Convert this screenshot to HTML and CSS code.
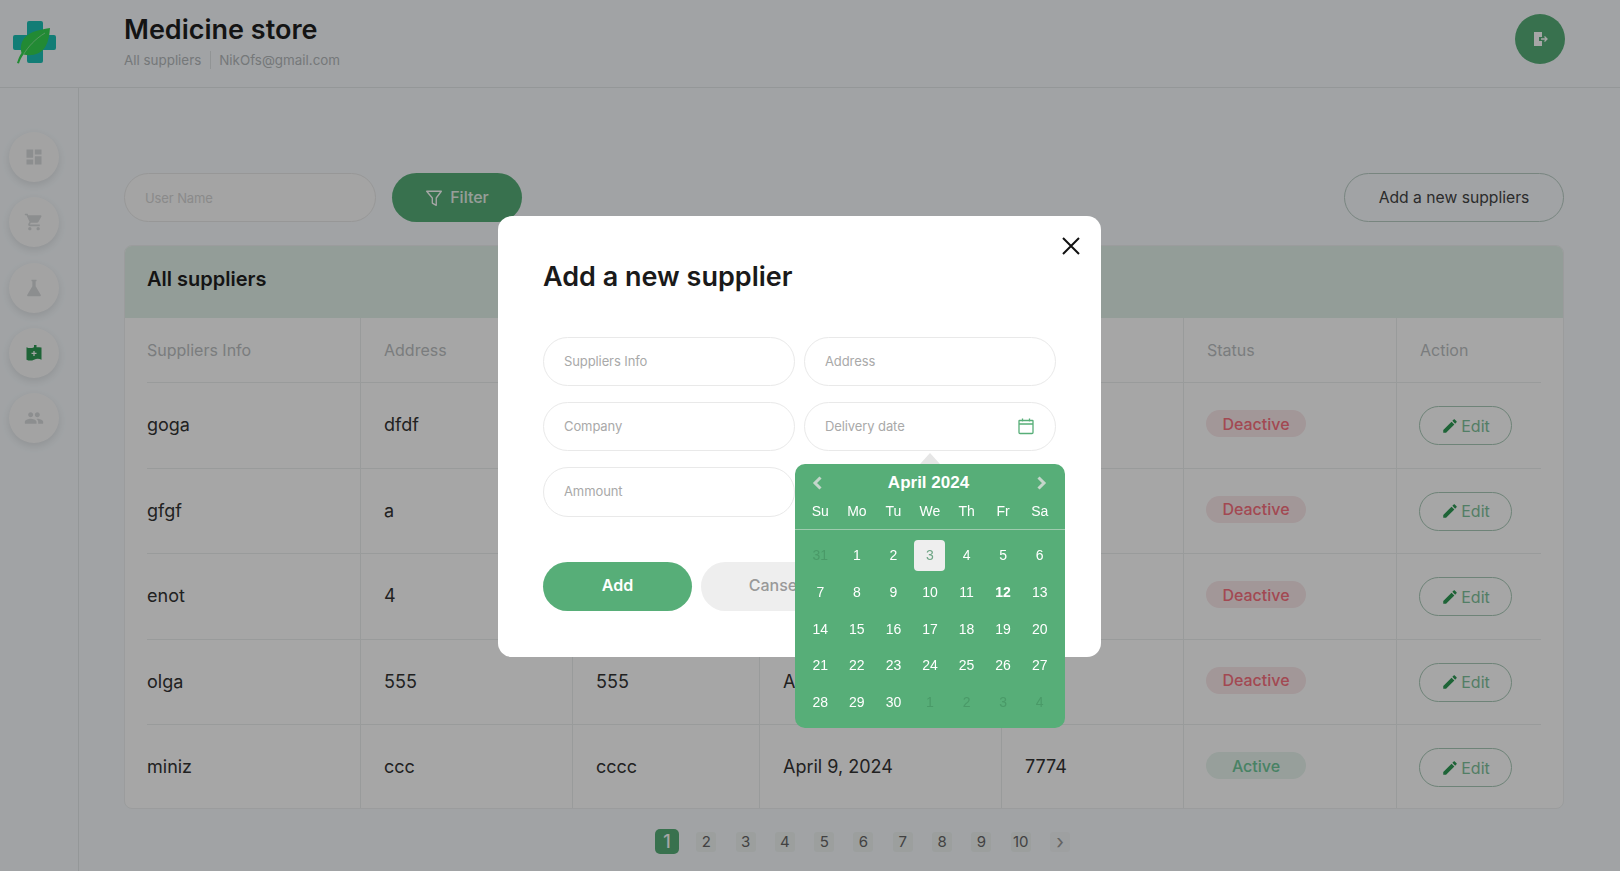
FILE: index.html
```html
<!DOCTYPE html>
<html lang="en">
<head>
    <meta charset="UTF-8">
    <meta name="viewport" content="width=device-width, initial-scale=1.0">
    <title>Medicine store</title>
    <link rel="stylesheet" href="styles.css">
</head>
<body>
    <header class="header">
        <div class="logo">
            <svg width="44" height="44" viewBox="0 0 44 44">
                <path d="M17 1h12a2 2 0 0 1 2 2v12h11a2 2 0 0 1 2 2v11a2 2 0 0 1-2 2H31v11a2 2 0 0 1-2 2H17a2 2 0 0 1-2-2V30H3a2 2 0 0 1-2-2V17a2 2 0 0 1 2-2h12V3a2 2 0 0 1 2-2z" fill="#1dc0b6"/>
                <path d="M38 8C26 10 14 12 10 22c-1.500 4-1.500 8-.5 11C7.500 36 6 39.500 5 43l2 .5c1-3.500 2.500-6.500 4.500-9 8 2 17 0 22-8 3-5 4-12 4.500-18.500z" fill="#35d450"/>
                <path d="M11.500 34.500C16 27 23 19 33 13" fill="none" stroke="#a5eeb0" stroke-width=".7"/>
            </svg>
        </div>
        <div class="header-text">
            <h1>Medicine store</h1>
            <p class="breadcrumbs"><span>All suppliers</span><span>NikOfs@gmail.com</span></p>
        </div>
        <button class="logout">
            <svg width="20" height="20" viewBox="0 0 20 20">
                <path d="M4 3h8v5H9v4h3v5H4z" fill="#fff"/>
                <path d="M11 10h6M14.500 7.500L17 10l-2.500 2.500" fill="none" stroke="#fff" stroke-width="1.300"/>
            </svg>
        </button>
    </header>

    <div class="layout">
        <nav class="sidebar">
            <a class="nav-item"><svg width="20" height="20" viewBox="0 0 24 24"><path d="M3 13h8V3H3v10zm0 8h8v-6H3v6zm10 0h8V11h-8v10zm0-18v6h8V3h-8z"/></svg></a>
            <a class="nav-item"><svg width="20" height="20" viewBox="0 0 24 24"><path d="M7 18c-1.100 0-1.990.9-1.990 2S5.900 22 7 22s2-.9 2-2-.9-2-2-2zM1 2v2h2l3.600 7.590-1.350 2.450c-.16.28-.25.61-.25.96 0 1.100.9 2 2 2h12v-2H7.420c-.14 0-.25-.11-.25-.25l.03-.12.9-1.630h7.450c.75 0 1.410-.41 1.750-1.030l3.580-6.490c.08-.14.12-.31.12-.48 0-.55-.45-1-1-1H5.210l-.94-2H1zm16 16c-1.100 0-1.990.9-1.990 2s.89 2 1.990 2 2-.9 2-2-.9-2-2-2z"/></svg></a>
            <a class="nav-item"><svg width="20" height="20" viewBox="0 0 24 24"><path d="M9 2h6v2h-1v6l6 10c.6 1.100-.1 2-1.200 2H5.200C4.100 22 3.400 21.100 4 20l6-10V4H9z"/></svg></a>
            <a class="nav-item current"><svg width="20" height="20" viewBox="0 0 24 24"><path d="M3 5c3 1.500 6 1.500 9 0V2.500h3V5c2 0 4 0 6 .5V20c-3-1.500-6-1.500-9 0s-6 1.500-9 0z"/><path d="M12 9.500v6M9 12.500h6" stroke="#fff" stroke-width="1.500" fill="none"/></svg></a>
            <a class="nav-item"><svg width="20" height="20" viewBox="0 0 24 24"><path d="M16 11c1.660 0 2.990-1.340 2.990-3S17.660 5 16 5c-1.660 0-3 1.340-3 3s1.340 3 3 3zm-8 0c1.660 0 2.990-1.340 2.990-3S9.660 5 8 5C6.340 5 5 6.340 5 8s1.340 3 3 3zm0 2c-2.330 0-7 1.170-7 3.500V19h14v-2.500c0-2.330-4.670-3.500-7-3.500zm8 0c-.29 0-.62.02-.97.05 1.160.84 1.970 1.970 1.970 3.450V19h6v-2.500c0-2.330-4.670-3.500-7-3.500z"/></svg></a>
        </nav>

        <main class="content">
            <div class="toolbar">
                <input class="pill-input filter-input" type="text" placeholder="User Name">
                <button class="btn-filter">
                    <svg width="18" height="18" viewBox="0 0 16 16"><path d="M1.500 2h13L10 8v6.500L6.500 12.500V8z" fill="none" stroke="#fff" stroke-width="1.200" stroke-linejoin="round"/></svg>
                    Filter
                </button>
                <button class="btn-add-new">Add a new suppliers</button>
            </div>

            <section class="card">
                <h2 class="card-title">All suppliers</h2>
                <table class="suppliers">
                    <colgroup>
                        <col class="col-info"><col class="col-address"><col class="col-company">
                        <col class="col-date"><col class="col-amount"><col class="col-status"><col class="col-action">
                    </colgroup>
                    <thead>
                        <tr>
                            <th>Suppliers Info</th><th>Address</th><th></th><th></th><th></th><th>Status</th><th>Action</th>
                        </tr>
                    </thead>
                    <tbody>
                        <tr>
                            <td>goga</td><td>dfdf</td><td></td><td></td><td></td>
                            <td><span class="badge deactive">Deactive</span></td>
                            <td><button class="btn-edit"><svg width="18" height="18" viewBox="0 0 24 24"><path d="M3 17.250V21h3.750L17.810 9.940l-3.750-3.750L3 17.250zM20.710 7.040c.39-.39.39-1.020 0-1.410l-2.340-2.340c-.39-.39-1.020-.39-1.410 0l-1.830 1.830 3.750 3.750 1.830-1.830z"/></svg>Edit</button></td>
                        </tr>
                        <tr>
                            <td>gfgf</td><td>a</td><td></td><td></td><td></td>
                            <td><span class="badge deactive">Deactive</span></td>
                            <td><button class="btn-edit"><svg width="18" height="18" viewBox="0 0 24 24"><path d="M3 17.250V21h3.750L17.810 9.940l-3.750-3.750L3 17.250zM20.710 7.040c.39-.39.39-1.020 0-1.410l-2.340-2.340c-.39-.39-1.020-.39-1.410 0l-1.830 1.830 3.750 3.750 1.830-1.830z"/></svg>Edit</button></td>
                        </tr>
                        <tr>
                            <td>enot</td><td>4</td><td></td><td></td><td></td>
                            <td><span class="badge deactive">Deactive</span></td>
                            <td><button class="btn-edit"><svg width="18" height="18" viewBox="0 0 24 24"><path d="M3 17.250V21h3.750L17.810 9.940l-3.750-3.750L3 17.250zM20.710 7.040c.39-.39.39-1.020 0-1.410l-2.340-2.340c-.39-.39-1.020-.39-1.410 0l-1.830 1.830 3.750 3.750 1.830-1.830z"/></svg>Edit</button></td>
                        </tr>
                        <tr>
                            <td>olga</td><td>555</td><td>555</td><td>April 9, 2024</td><td></td>
                            <td><span class="badge deactive">Deactive</span></td>
                            <td><button class="btn-edit"><svg width="18" height="18" viewBox="0 0 24 24"><path d="M3 17.250V21h3.750L17.810 9.940l-3.750-3.750L3 17.250zM20.710 7.040c.39-.39.39-1.020 0-1.410l-2.340-2.340c-.39-.39-1.020-.39-1.410 0l-1.830 1.830 3.750 3.750 1.830-1.830z"/></svg>Edit</button></td>
                        </tr>
                        <tr>
                            <td>miniz</td><td>ccc</td><td>cccc</td><td>April 9, 2024</td><td>7774</td>
                            <td><span class="badge active">Active</span></td>
                            <td><button class="btn-edit"><svg width="18" height="18" viewBox="0 0 24 24"><path d="M3 17.250V21h3.750L17.810 9.940l-3.750-3.750L3 17.250zM20.710 7.040c.39-.39.39-1.020 0-1.410l-2.340-2.340c-.39-.39-1.020-.39-1.410 0l-1.830 1.830 3.750 3.750 1.830-1.830z"/></svg>Edit</button></td>
                        </tr>
                    </tbody>
                </table>
            </section>

            <div class="pagination">
                <a class="page current"><span>1</span></a>
                <a class="page"><span>2</span></a>
                <a class="page"><span>3</span></a>
                <a class="page"><span>4</span></a>
                <a class="page"><span>5</span></a>
                <a class="page"><span>6</span></a>
                <a class="page"><span>7</span></a>
                <a class="page"><span>8</span></a>
                <a class="page"><span>9</span></a>
                <a class="page"><span>10</span></a>
                <a class="page next"><span>&#8250;</span></a>
            </div>
        </main>
    </div>

    <div class="overlay">
        <div class="modal">
            <button class="modal-close">
                <svg width="20" height="20" viewBox="0 0 20 20"><path d="M2 2l16 16M18 2L2 18" stroke="#111" stroke-width="2" fill="none"/></svg>
            </button>
            <h2 class="modal-title">Add a new supplier</h2>
            <div class="form-grid">
                <input class="pill-input" type="text" placeholder="Suppliers Info">
                <input class="pill-input" type="text" placeholder="Address">
                <input class="pill-input" type="text" placeholder="Company">
                <div class="date-field">
                    <input class="pill-input" type="text" placeholder="Delivery date">
                    <svg class="date-icon" width="18" height="18" viewBox="0 0 18 18">
                        <path d="M2.500 3.500h13a.5.5 0 0 1 .5.5v11.500a1 1 0 0 1-1 1H3a1 1 0 0 1-1-1V4a.5.5 0 0 1 .5-.5zM2 7h14M5.500 1.500v3M12.500 1.500v3" fill="none" stroke="#57ae78" stroke-width="1.300"/>
                    </svg>
                    <div class="calendar">
                        <div class="cal-head">
                            <svg width="11" height="14" viewBox="0 0 11 14"><path d="M8.500 1.500L3 7l5.500 5.500" fill="none" stroke="#c4d6cb" stroke-width="3"/></svg>
                            <span class="cal-month">April 2024</span>
                            <svg width="11" height="14" viewBox="0 0 11 14"><path d="M2.500 1.500L8 7l-5.500 5.500" fill="none" stroke="#c4d6cb" stroke-width="3"/></svg>
                        </div>
                        <div class="cal-weekdays">
                            <span>Su</span><span>Mo</span><span>Tu</span><span>We</span><span>Th</span><span>Fr</span><span>Sa</span>
                        </div>
                        <div class="cal-days">
                            <span class="muted">31</span><span>1</span><span>2</span><span class="today">3</span><span>4</span><span>5</span><span>6</span>
                            <span>7</span><span>8</span><span>9</span><span>10</span><span>11</span><span class="strong">12</span><span>13</span>
                            <span>14</span><span>15</span><span>16</span><span>17</span><span>18</span><span>19</span><span>20</span>
                            <span>21</span><span>22</span><span>23</span><span>24</span><span>25</span><span>26</span><span>27</span>
                            <span>28</span><span>29</span><span>30</span><span class="muted">1</span><span class="muted">2</span><span class="muted">3</span><span class="muted">4</span>
                        </div>
                    </div>
                </div>
                <input class="pill-input tall" type="text" placeholder="Ammount">
            </div>
            <div class="modal-actions">
                <button class="btn-primary">Add</button>
                <button class="btn-cancel">Cansel</button>
            </div>
        </div>
    </div>
</body>
</html>
```

FILE: styles.css
```css
* {
    box-sizing: border-box;
}

body {
    margin: 0;
    height: 871px;
    overflow: hidden;
    font-family: Inter, "Liberation Sans", sans-serif;
    color: #333;
    background-color: #f7fbfe;
}

button {
    font-family: inherit;
    cursor: pointer;
}

.header {
    height: 88px;
    display: flex;
    align-items: center;
    padding-right: 55px;
    border-bottom: 1px solid #e4e8ea;
}

.logo {
    width: 124px;
    padding: 0 0 3px 12px;
    display: flex;
}

.header-text {
    flex: 1;
    margin-top: -6px;
}

.header-text h1 {
    margin: 0;
    font-size: 27px;
    font-weight: 600;
    line-height: 34px;
    color: #1f1f1f;
}

.breadcrumbs {
    margin: 4px 0 0;
    font-size: 13.400px;
    line-height: 18px;
    color: #b4b8bb;
    display: flex;
}

.breadcrumbs span + span {
    margin-left: 9px;
    padding-left: 8px;
    border-left: 1px solid #dfe3e5;
}

.logout {
    width: 50px;
    height: 50px;
    border: 0;
    border-radius: 50%;
    background: #57ae78;
    display: flex;
    align-items: center;
    justify-content: center;
    margin-top: -9px;
}

.layout {
    display: flex;
    height: 783px;
}

.sidebar {
    width: 79px;
    flex: none;
    border-right: 1px solid #e4e8ea;
    padding: 44px 0 0 9px;
    display: flex;
    flex-direction: column;
    gap: 15.300px;
}

.nav-item {
    width: 50px;
    height: 50px;
    border-radius: 50%;
    background: #fbfbfb;
    box-shadow: 0 3px 8px rgba(0, 0, 0, 0.1);
    display: flex;
    align-items: center;
    justify-content: center;
    fill: #d8dadc;
}

.nav-item.current {
    fill: #2f9a55;
}

.content {
    flex: 1;
    padding: 85px 56px 0 45px;
}

.toolbar {
    display: flex;
    gap: 16px;
    margin-bottom: 23px;
}

.pill-input {
    width: 252px;
    height: 49px;
    border: 1px solid #e9e9e9;
    border-radius: 25px;
    padding: 0 20px 2px;
    font-family: inherit;
    font-size: 13px;
    letter-spacing: -0.1px;
    background: #fff;
    outline: none;
}

.pill-input.tall {
    height: 50px;
}

.pill-input::placeholder {
    color: #a9a9a9;
}

.filter-input {
    background: #fcfcfc;
    padding-bottom: 0;
}

.filter-input::placeholder {
    color: #d5d5d5;
}

.btn-filter {
    width: 130px;
    height: 49px;
    border: 0;
    border-radius: 25px;
    padding-bottom: 3px;
    background: #57ae78;
    color: #e9f3ec;
    font-size: 16px;
    font-weight: 500;
    display: flex;
    align-items: center;
    justify-content: center;
    gap: 7px;
}

.btn-filter svg {
    margin-top: 3px;
}

.btn-add-new {
    width: 220px;
    height: 49px;
    margin-left: auto;
    border: 1px solid #b9ccc4;
    border-radius: 25px;
    background: transparent;
    color: #444;
    font-size: 15.700px;
}

.card {
    border: 1px solid #eef0f1;
    border-radius: 8px;
    overflow: hidden;
    background: #fff;
}

.card-title {
    margin: 0;
    height: 72px;
    padding: 0 0 7px 22px;
    display: flex;
    align-items: center;
    background: #e2f1ea;
    font-size: 20px;
    font-weight: 600;
    color: #1f1f1f;
}

.suppliers {
    width: 100%;
    border-collapse: collapse;
    table-layout: fixed;
}

.col-info { width: 235px; }
.col-address { width: 212px; }
.col-company { width: 187px; }
.col-date { width: 242px; }
.col-amount { width: 182px; }
.col-status { width: 213px; }

.suppliers th,
.suppliers td {
    padding: 0 22px 2px 23.500px;
    text-align: left;
    border-right: 1px solid #eceeef;
    background: linear-gradient(#eceeef, #eceeef) no-repeat left bottom / 100% 1px;
}

.suppliers th:first-child,
.suppliers td:first-child {
    padding-left: 22px;
    background-position: right bottom;
    background-size: calc(100% - 22px) 1px;
}

.suppliers th:last-child,
.suppliers td:last-child {
    border-right: 0;
    background-size: calc(100% - 22px) 1px;
}

.suppliers th {
    height: 65px;
    font-size: 16px;
    font-weight: 400;
    color: #bcbfc2;
}

.suppliers td {
    height: 85.500px;
    font-size: 18px;
}

.suppliers tr:last-child td {
    height: 83px;
    padding-bottom: 0;
    background: none;
}

.badge {
    width: 100px;
    height: 27px;
    border-radius: 14px;
    display: flex;
    align-items: center;
    justify-content: center;
    font-size: 16px;
    font-weight: 500;
    margin: -2px 0 0 -1px;
}

.deactive {
    background: #f9e8ea;
    color: #f9707f;
}

.active {
    background: #e8f5ee;
    color: #6fc89a;
}

.btn-edit {
    width: 93px;
    height: 39px;
    border: 1px solid #a9c9b8;
    border-radius: 20px;
    margin: 2px 0 0 -1px;
    background: transparent;
    color: #7fc29b;
    font-size: 16px;
    fill: #2f9a55;
    display: flex;
    align-items: center;
    justify-content: center;
    gap: 2px;
}

.pagination {
    display: flex;
    justify-content: center;
    padding: 20px 0 0 39px;
}

.page {
    width: 39.300px;
    height: 25px;
    display: flex;
    align-items: center;
    justify-content: center;
    font-size: 15px;
    color: #666;
}

.page span {
    min-width: 20px;
    height: 20px;
    border-radius: 3px;
    background: #f0f4f3;
    display: flex;
    align-items: center;
    justify-content: center;
}

.page.current span {
    width: 24px;
    height: 25px;
    border-radius: 5px;
    background: #57ae78;
    color: #fff;
    font-size: 18px;
    font-weight: 500;
}

.page.next span {
    background: #f3f6f7;
    color: #999;
    font-size: 20px;
}

/* add supplier dialog */
.overlay {
    position: fixed;
    inset: 0;
    background: rgba(0, 0, 0, 0.35);
    padding: 216px 0 0 498px;
}

.modal {
    position: relative;
    width: 603px;
    height: 441px;
    border-radius: 14px;
    background: #fff;
    padding: 42px 45px 0;
}

.modal-close {
    position: absolute;
    top: 20px;
    right: 20px;
    width: 20px;
    height: 20px;
    padding: 0;
    border: 0;
    background: none;
    display: flex;
}

.modal-title {
    margin: 0 0 41px;
    font-size: 27px;
    line-height: 38px;
    font-weight: 600;
    color: #1a1a1a;
}

.form-grid {
    display: grid;
    grid-template-columns: 252px 252px;
    column-gap: 9px;
    row-gap: 16px;
}

.date-field {
    position: relative;
}

.date-icon {
    position: absolute;
    top: 15px;
    right: 21px;
}

.calendar {
    position: absolute;
    top: 62px;
    left: -9px;
    width: 270px;
    height: 264px;
    padding: 0 7px;
    border-radius: 10px;
    background: #57ae78;
    color: #fff;
    font-family: "Liberation Sans", Arial, sans-serif;
    font-size: 14px;
}

.calendar::before {
    content: "";
    position: absolute;
    top: -11px;
    left: 125px;
    border: 10px solid transparent;
    border-top: 0;
    border-bottom: 11px solid #e6e6e6;
}

.cal-head {
    height: 37px;
    padding: 0 11px 0 10px;
    display: flex;
    align-items: center;
    justify-content: space-between;
}

.cal-month {
    font-size: 17px;
    font-weight: 700;
    margin-left: -2px;
}

.cal-weekdays,
.cal-days {
    display: grid;
    grid-template-columns: repeat(7, 1fr);
    text-align: center;
}

.cal-weekdays {
    height: 29px;
    margin: 0 -7px;
    padding: 2px 7px 0;
    border-bottom: 1px solid #9ecbae;
    line-height: 16px;
}

.cal-days {
    padding-top: 7.500px;
    grid-auto-rows: 36.700px;
    align-items: center;
    justify-items: center;
}

.cal-days span {
    width: 31px;
    height: 31px;
    line-height: 31px;
}

.cal-days .muted {
    color: #4a9a68;
}

.cal-days .strong {
    font-weight: 700;
}

.cal-days .today {
    border-radius: 4px;
    background: #eee;
    color: #6fa585;
}

.modal-actions {
    display: flex;
    gap: 9px;
    margin-top: 45px;
}

.btn-primary,
.btn-cancel {
    width: 149px;
    height: 49px;
    border: 0;
    border-radius: 25px;
    padding-bottom: 4px;
    font-size: 16px;
    font-weight: 600;
}

.btn-primary {
    background: #57ae78;
    color: #fff;
}

.btn-cancel {
    padding-left: 5px;
    background: #eee;
    color: #999;
    font-weight: 500;
}
```
